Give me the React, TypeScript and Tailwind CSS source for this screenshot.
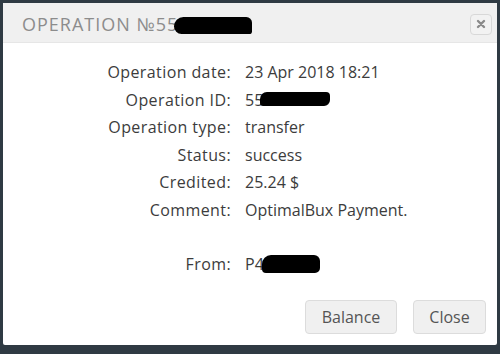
import React from "react";

const rows: [string, React.ReactNode][] = [
  ["Operation date:", "23 Apr 2018 18:21"],
  [
    "Operation ID:",
    <>
      55
      <span className="inline-block align-middle w-[70px] h-[14px] bg-black rounded-[7px_4px_6px_3px] -ml-[3px] -mt-[4px]" />
    </>,
  ],
  ["Operation type:", "transfer"],
  ["Status:", "success"],
  ["Credited:", "25.24 $"],
  ["Comment:", "OptimalBux Payment."],
];

export default function App() {
  return (
    <div className="w-[500px] h-[354px] bg-[#2f3a43] pt-[3px] px-[3px] pb-[9px] font-['Open_Sans',sans-serif]">
      <div className="h-full bg-white flex flex-col rounded-[2px]">
        <div className="h-[40px] bg-[#f0f0f0] border-b border-[#e6e6e6] flex items-center justify-between pl-[19px] pr-[5px]">
          <div className="text-[18px] tracking-[1px] text-[#8c8c8c] flex items-center mt-[3px]">
            OPERATION №55
            <span className="inline-block w-[78px] h-[17px] bg-black rounded-[10px_6px_3px_8px] -ml-[4px] mt-[3px]" />
          </div>
          <button className="w-[22px] h-[21px] mt-[3px] border border-[#d8d8d8] rounded-[4px] bg-[#f2f2f2] flex items-center justify-center">
            <svg width="10" height="10" viewBox="0 0 10 10">
              <path d="M2 2 L8 8 M8 2 L2 8" stroke="#8a8a8a" strokeWidth="2.4" strokeLinecap="round" />
            </svg>
          </button>
        </div>
        <div className="pt-[19px] grid grid-cols-[228px_1fr] gap-x-[14px] gap-y-[6.5px] text-[16px] leading-[21px] text-[#3c3c3c]">
          {rows.map(([label, value]) => (
            <React.Fragment key={label}>
              <div className="text-right tracking-[0.4px]">{label}</div>
              <div>{value}</div>
            </React.Fragment>
          ))}
          <div className="text-right tracking-[0.4px] mt-[27px]">From:</div>
          <div className="mt-[27px]">
            P4
            <span className="inline-block align-middle w-[58px] h-[18px] bg-black rounded-[9px_6px_5px_4px] -ml-[2px] -mt-[3px]" />
          </div>
        </div>
        <div className="mt-auto flex justify-end gap-[16px] pr-[11px] pb-[11px]">
          <button className="w-[92px] h-[34px] bg-[#f0f0f0] border border-[#dcdcdc] rounded-[4px] text-[16px] text-[#555]">
            Balance
          </button>
          <button className="w-[73px] h-[34px] bg-[#f0f0f0] border border-[#dcdcdc] rounded-[4px] text-[16px] text-[#555]">
            Close
          </button>
        </div>
      </div>
    </div>
  );
}
